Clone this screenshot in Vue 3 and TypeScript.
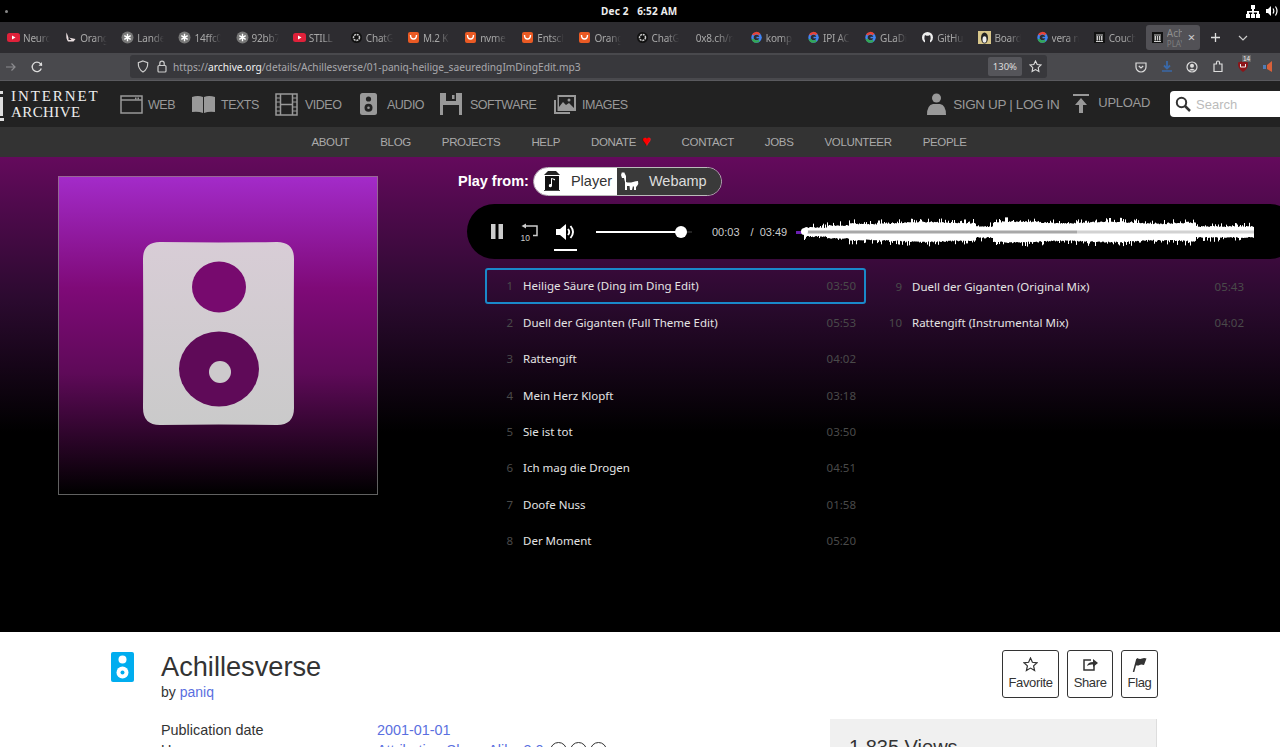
<script setup lang="ts">
import { computed } from 'vue'

interface Tab { label: string; icon: string }
const tabs: Tab[] = [
  { label: 'Neuro', icon: 'yt' }, { label: 'Orange', icon: 'bird' }, { label: 'Lande', icon: 'star' },
  { label: '14ffc0', icon: 'star' }, { label: '92bb7', icon: 'star' }, { label: 'STILL', icon: 'yt' },
  { label: 'ChatG', icon: 'gpt' }, { label: 'M.2 K', icon: 'ali' }, { label: 'nvme', icon: 'ali' },
  { label: 'Entsch', icon: 'ali' }, { label: 'Orang', icon: 'ali' }, { label: 'ChatG', icon: 'gpt' },
  { label: '0x8.ch/rc', icon: 'none' }, { label: 'komp', icon: 'g' }, { label: 'IPI AC', icon: 'g' },
  { label: 'GLaDi', icon: 'g' }, { label: 'GitHu', icon: 'gh' }, { label: 'Board', icon: 'tux' },
  { label: 'vera n', icon: 'g' }, { label: 'Couch', icon: 'ia' },
]
const mainNav = ['WEB', 'TEXTS', 'VIDEO', 'AUDIO', 'SOFTWARE', 'IMAGES']
const subNav = ['ABOUT', 'BLOG', 'PROJECTS', 'HELP', 'DONATE', 'CONTACT', 'JOBS', 'VOLUNTEER', 'PEOPLE']
const tracks = [
  ['Heilige Säure (Ding im Ding Edit)', '03:50'], ['Duell der Giganten (Full Theme Edit)', '05:53'],
  ['Rattengift', '04:02'], ['Mein Herz Klopft', '03:18'], ['Sie ist tot', '03:50'],
  ['Ich mag die Drogen', '04:51'], ['Doofe Nuss', '01:58'], ['Der Moment', '05:20'],
  ['Duell der Giganten (Original Mix)', '05:43'], ['Rattengift (Instrumental Mix)', '04:02'],
]

const wavePath = computed(() => {
  const n = 450
  let seed = 17
  const rnd = () => { seed = (seed * 16807) % 2147483647; return seed / 2147483647 }
  let d = ''
  for (let i = 0; i < n; i++) {
    const t = i / n
    let env = 7.5 + 1.6 * Math.sin(t * Math.PI) + 0.8 * Math.sin(t * 30)
    if (t < 0.05) env = 4
    else if (t < 0.1) env = 6
    else if (t > 0.38 && t < 0.42) env = 5
    else if (t > 0.87) env = 5
    const spike = rnd() > 0.7 ? rnd() * 5 : rnd() * 1
    const spike2 = rnd() > 0.7 ? rnd() * 5 : rnd() * 1
    d += `M${i + 0.5} ${(15 - env - spike).toFixed(1)}V${(15 + env + spike2).toFixed(1)}`
  }
  return d
})
</script>

<template>
  <div class="page">
    <div class="os">
      <span class="os-dot"></span>
      <span class="os-clock">Dec 2&nbsp;&nbsp;&nbsp;6:52 AM</span>
      <span class="os-tray">
        <svg width="14" height="13" viewBox="0 0 14 13"><path fill="#fff" d="M5 0h4v4H8v2h5v3h1v4h-4V9h1V7.500H7.800V9H9v4H5V9h1.200V7.500H3V9h1v4H0V9h1V6h5V4H5z"/></svg>
        <svg width="13" height="12" viewBox="0 0 13 12"><path fill="#fff" d="M0 4h2l3-3v10L2 8H0z"/><path fill="none" stroke="#fff" stroke-width="1.200" d="M7 3.500q1.600 2.500 0 5M9.500 1.500q3 4.500 0 9"/></svg>
      </span>
    </div>

    <div class="tabs">
      <div v-for="(t, i) in tabs" :key="i" class="tab">
        <svg v-if="t.icon !== 'none'" class="fav" width="13" height="13" viewBox="0 0 13 13">
          <template v-if="t.icon === 'yt'"><rect y="2" width="13" height="9" rx="2.500" fill="#e0213a"/><path d="M5 4.500v4l3.500-2z" fill="#fff"/></template>
          <template v-else-if="t.icon === 'bird'"><path d="M2.500 1.500l2 5 7 1.500-2 2.500H4Q1.500 7 2.500 1.500z" fill="#eadfe0"/><path d="M4.500 5.500l3 3.500H4.500z" fill="#2b2a2e"/></template>
          <template v-else-if="t.icon === 'star'"><circle cx="6.500" cy="6.500" r="6" fill="#777"/><path d="M6.500 2.800v7.400M3.300 4.600l6.400 3.800M9.700 4.600L3.300 8.400" stroke="#fff" stroke-width="1.400"/></template>
          <template v-else-if="t.icon === 'gpt'"><circle cx="6.500" cy="6.500" r="5.500" fill="#111"/><circle cx="6.500" cy="6.500" r="3" fill="none" stroke="#ccc" stroke-width="1.500" stroke-dasharray="2 .8"/></template>
          <template v-else-if="t.icon === 'ali'"><rect x="1" y="1" width="11" height="11" rx="2" fill="#ea5a24"/><path d="M3.500 4q0 4 3 4t3-4" fill="none" stroke="#fff" stroke-width="1.400"/></template>
          <template v-else-if="t.icon === 'g'"><circle cx="6.500" cy="6.500" r="4" fill="none" stroke="#4285f4" stroke-width="2.400"/><path d="M3 4a4 4 0 0 1 6.500-.5" fill="none" stroke="#ea4335" stroke-width="2.400"/><path d="M2.700 8a4 4 0 0 0 6.500 1.500" fill="none" stroke="#34a853" stroke-width="2.400"/><path d="M6.500 5.800h5v1.500h-5z" fill="#4285f4"/></template>
          <template v-else-if="t.icon === 'gh'"><circle cx="6.500" cy="6.500" r="5.500" fill="#eee"/><path d="M4 12V9.500Q3 8 3.500 5.500L4 4l1.500.8h2L9 4l.5 1.500Q10 8 9 9.500V12z" fill="#2b2a2e"/></template>
          <template v-else-if="t.icon === 'tux'"><rect width="13" height="13" fill="#d8c68a"/><ellipse cx="6.500" cy="7" rx="3.500" ry="5.500" fill="#222"/><ellipse cx="6.500" cy="8.500" rx="2" ry="3.200" fill="#eee"/></template>
          <template v-else><rect x="1" y="1" width="11" height="11" fill="#111"/><path d="M3 3.500h7v1H3zM3.500 5h1.500v4.500H3.500zM5.800 5h1.400v4.500H5.800zM8 5h1.500v4.500H8zM3 10h7v1H3z" fill="#ccc"/></template>
        </svg>
        <span class="tab-label" :class="{ 'no-icon': t.icon === 'none' }">{{ t.label }}</span>
      </div>
      <div class="tab-active">
        <svg width="13" height="13" viewBox="0 0 13 13"><rect x="1" y="1" width="11" height="11" fill="#111"/><path d="M3 3.500h7v1H3zM3.500 5h1.500v4.500H3.500zM5.800 5h1.400v4.500H5.800zM8 5h1.500v4.500H8zM3 10h7v1H3z" fill="#ccc"/></svg>
        <span class="tab-stack"><span>Ach</span><small>PLAY</small></span>
        <span class="tab-x">×</span>
      </div>
      <svg class="tab-plus" width="11" height="11" viewBox="0 0 11 11"><path d="M5.500 1v9M1 5.500h9" stroke="#ddd" stroke-width="1.300"/></svg>
      <svg class="tab-chev" width="10" height="6" viewBox="0 0 10 6"><path d="M1 1l4 4 4-4" fill="none" stroke="#ccc" stroke-width="1.200"/></svg>
    </div>

    <div class="urlbar">
      <svg class="ub-arrow" width="11" height="10" viewBox="0 0 11 10"><path d="M1 5h9M6.500 1.500L10 5 6.500 8.500" fill="none" stroke="#8c8c90" stroke-width="1.200"/></svg>
      <svg class="ub-reload" width="12" height="12" viewBox="0 0 12 12"><path d="M10.300 7.500A4.700 4.700 0 1 1 9.500 2.800L11 4.500" fill="none" stroke="#ddd" stroke-width="1.300"/><path d="M11 1v3.800H7.500z" fill="#ddd"/></svg>
      <div class="url-field">
        <svg width="12" height="13" viewBox="0 0 12 13"><path d="M6 1l4.700 1.600q.3 6.400-4.700 9.400Q1 9 1.300 2.600z" fill="none" stroke="#ccc" stroke-width="1.200"/></svg>
        <svg class="lock" width="10" height="13" viewBox="0 0 10 13"><rect x="1" y="5.500" width="8" height="6.500" rx="1" fill="none" stroke="#ccc" stroke-width="1.200"/><path d="M2.800 5.500V3.300a2.200 2.200 0 0 1 4.400 0v2.200" fill="none" stroke="#ccc" stroke-width="1.200"/></svg>
        <span class="url"><span>https://</span><b>archive.org</b><span>/details/Achillesverse/01-paniq-heilige_saeuredingImDingEdit.mp3</span></span>
        <span class="zoom-pill">130%</span>
        <svg width="13" height="13" viewBox="0 0 13 13"><path d="M6.500 1l1.700 3.500 3.800.5-2.800 2.600.7 3.800-3.400-1.800-3.400 1.800.7-3.800L1 5l3.800-.5z" fill="none" stroke="#ddd" stroke-width="1.100"/></svg>
      </div>
      <div class="ub-tools">
        <svg width="12" height="12" viewBox="0 0 12 12"><path d="M1 2h10v4a5 5 0 0 1-10 0z" fill="none" stroke="#ddd" stroke-width="1.200"/><path d="M3.800 5L6 7l2.200-2" fill="none" stroke="#ddd" stroke-width="1.200"/></svg>
        <svg width="12" height="13" viewBox="0 0 12 13"><path d="M6 1v7M3 5.500L6 8.500l3-3" fill="none" stroke="#3a69a8" stroke-width="1.800"/><path d="M1 11h10" stroke="#3a69a8" stroke-width="1.500"/></svg>
        <svg width="12" height="12" viewBox="0 0 12 12"><circle cx="6" cy="6" r="5" fill="none" stroke="#ddd" stroke-width="1.200"/><circle cx="6" cy="4.800" r="2" fill="#ddd"/><path d="M2.500 9.500q3.500-3.500 7 0z" fill="#ddd"/></svg>
        <svg width="12" height="13" viewBox="0 0 12 13"><path d="M2 4h2.500V2.500a1.500 1.500 0 0 1 3 0V4H10v7.500H2z" fill="none" stroke="#ddd" stroke-width="1.200"/></svg>
        <span class="ublock">
          <svg width="12" height="13" viewBox="0 0 12 13"><path d="M1 2.500L6 1l5 1.500q.3 6.500-5 9.500Q.7 9 1 2.500z" fill="#8e1418"/><path d="M3.500 4v3h5V4" fill="none" stroke="#eee"/></svg>
          <em>14</em>
        </span>
        <svg width="11" height="13" viewBox="0 0 11 13"><path d="M0 5h3v4H0z" fill="#4f7cb5"/><path d="M4 5l5-4v11L4 9z" fill="#d9613a"/></svg>
      </div>
    </div>

    <header class="ia-top">
      <div class="ia-logo">
        <svg class="ia-mark" width="4" height="34" viewBox="0 0 4 34"><path d="M0 3h3v3H0zM0 9h3v19H0zM0 30h4v3H0z" fill="#ddd"/></svg>
        <div class="ia-word"><span class="w1">INTERNET</span><span class="w2">ARCHIVE</span></div>
      </div>
      <nav class="ia-media">
        <a v-for="m in mainNav" :key="m" class="ia-item">
          <svg v-if="m === 'WEB'" width="23" height="19" viewBox="0 0 23 19"><rect x="1" y="1" width="21" height="17" fill="none" stroke="#999" stroke-width="1.500"/><path d="M1 5h21" stroke="#999" stroke-width="1.500"/><path d="M15 2.500h1.500v2H15zM17.500 2.500H19v2h-1.500z" fill="#999"/></svg>
          <svg v-else-if="m === 'TEXTS'" width="23" height="19" viewBox="0 0 23 19"><path d="M0 2q6-2 11 0v16Q6 16 0 17zM23 2q-6-2-11 0v16q5-2 11-1z" fill="#999"/></svg>
          <svg v-else-if="m === 'VIDEO'" width="23" height="23" viewBox="0 0 23 23"><rect x="1" y="1" width="21" height="21" fill="none" stroke="#999" stroke-width="1.500"/><path d="M5.500 1v21M17.500 1v21M5.500 11.500h12" stroke="#999" stroke-width="1.500"/><path d="M1 5h4M1 9h4M1 14h4M1 18h4M18 5h4M18 9h4M18 14h4M18 18h4" stroke="#999"/></svg>
          <svg v-else-if="m === 'AUDIO'" width="17" height="22" viewBox="0 0 17 22"><rect width="17" height="22" rx="2.500" fill="#999"/><circle cx="8.500" cy="6" r="2.600" fill="#222"/><circle cx="8.500" cy="14.800" r="4" fill="#222"/><circle cx="8.500" cy="14.800" r="1.300" fill="#999"/></svg>
          <svg v-else-if="m === 'SOFTWARE'" width="22" height="22" viewBox="0 0 22 22"><path d="M0 0h22v22H0z" fill="#999"/><path d="M6 0h10v8H6z" fill="#222"/><path d="M12 2h2.500v4H12z" fill="#999"/><path d="M3 12h16v10H3z" fill="#222"/></svg>
          <svg v-else width="22" height="19" viewBox="0 0 22 19"><path d="M0 5h2v12h14v2H0z" fill="#999"/><path d="M3.500 0H22v16H3.500z" fill="#999"/><path d="M5 2v10l4-5 3 3 3-2 5 5V2z" fill="#222"/><circle cx="15" cy="5" r="1.500" fill="#999"/></svg>
          <span>{{ m }}</span>
        </a>
      </nav>
      <div class="ia-right">
        <svg width="19" height="22" viewBox="0 0 19 22"><circle cx="9.500" cy="5" r="4.500" fill="#999"/><path d="M0 22q0-10 6-11h7q6 1 6 11z" fill="#999"/></svg>
        <span class="ia-sign">SIGN UP | LOG IN</span>
        <svg class="ia-up" width="16" height="19" viewBox="0 0 16 19"><path d="M0 0h16v2H0zM8 4l6 7h-4v8H6v-8H2z" fill="#999"/></svg>
        <span class="ia-upload">UPLOAD</span>
        <div class="ia-search">
          <svg width="16" height="16" viewBox="0 0 16 16"><circle cx="6.500" cy="6.500" r="4.700" fill="none" stroke="#333" stroke-width="2"/><path d="M10 10l5 5" stroke="#333" stroke-width="2.500"/></svg>
          <span>Search</span>
        </div>
      </div>
    </header>
    <nav class="ia-sub">
      <a v-for="s in subNav" :key="s">{{ s }}<i v-if="s === 'DONATE'" class="heart">♥</i></a>
    </nav>

    <section class="theatre">
      <div class="cover">
        <svg width="151" height="183" viewBox="0 0 151 183">
          <defs><linearGradient id="sp" x1="0" y1="0" x2="0" y2="1"><stop offset="0" stop-color="#d8cdd6"/><stop offset="1" stop-color="#cacaca"/></linearGradient></defs>
          <path fill="url(#sp)" d="M17 0Q76 .8 134 0 151 0 151 17 150.500 92 151 166 151 183 134 183 76 182.200 17 183 0 183 0 166 .5 92 0 17 0 0 17 0z"/>
          <ellipse cx="76" cy="45" rx="27" ry="25.500" fill="#770a6e"/>
          <ellipse cx="76" cy="127" rx="40" ry="37.500" fill="#5f0a58"/>
          <circle cx="77" cy="130" r="11" fill="#cdcacc"/>
        </svg>
      </div>
      <div class="stage">
        <div class="source">
          <strong>Play from:</strong>
          <div class="switch">
            <span class="sw-player">
              <svg width="18" height="20" viewBox="0 0 18 20"><path d="M1 4L5 0h8l4 4z" fill="#222"/><path d="M2 5h14v14H2z" fill="#111"/><path d="M9 8v6.500a1.600 1.600 0 1 1-1-1.400V7l4 1v1.500z" fill="#fff"/><path d="M1 19h16v1H1z" fill="#444"/></svg>
              Player
            </span>
            <span class="sw-webamp">
              <svg width="20" height="20" viewBox="0 0 20 20"><path d="M1 4l1-3 1 1 1-1 1 2 1 2v6q3 1 7 0 3-1 5-1 1 3-1 5l-1 1v3h-2v-3l-1-1-1 4h-2l-.5-4H7v4H5v-8L4 7H2z" fill="#fff"/></svg>
              Webamp
            </span>
          </div>
        </div>
        <div class="player">
          <svg class="pl-pause" width="12" height="15" viewBox="0 0 12 15"><path d="M0 0h4.500v15H0zM7.500 0H12v15H7.500z" fill="#ccc"/></svg>
          <svg class="pl-back" width="18" height="18" viewBox="0 0 18 18"><path d="M6 3h11v9.500h-4" fill="none" stroke="#ccc" stroke-width="1.500"/><path d="M6 .5v5L1.500 3z" fill="#ccc"/><text x="0.500" y="17.500" font-size="8.500" fill="#ccc" font-family="Liberation Sans, sans-serif">10</text></svg>
          <div class="pl-vol">
            <svg width="19" height="16" viewBox="0 0 19 16"><path d="M0 5h4l6-5v16l-6-5H0z" fill="#fff"/><path d="M12 5q2.500 3 0 6M14.500 2q5 6 0 12" fill="none" stroke="#fff" stroke-width="1.900"/></svg>
            <i></i>
          </div>
          <div class="pl-slider"><i></i><b></b></div>
          <span class="pl-cur">00:03</span>
          <span class="pl-tot">/&nbsp;&nbsp;03:49</span>
          <div class="pl-wave">
            <i class="pl-done"></i>
            <svg width="450" height="30" viewBox="0 0 450 30">
              <path :d="wavePath" stroke="#fff" stroke-width="1" fill="none"/>
              <rect x="0" y="13.500" width="273" height="3" fill="#a8a8a8"/>
              <rect x="273" y="13.500" width="177" height="3" fill="#d2d2d2"/>
            </svg>
            <b class="pl-knob"></b>
          </div>
        </div>
        <ol class="tracks">
          <li v-for="(t, i) in tracks" :key="i" class="track" :class="{ on: i === 0 }">
            <span class="t-n">{{ i + 1 }}</span>
            <span class="t-name">{{ t[0] }}</span>
            <span class="t-d">{{ t[1] }}</span>
          </li>
        </ol>
      </div>
    </section>

    <section class="info">
      <svg class="info-ico" width="23" height="30" viewBox="0 0 23 30"><rect width="23" height="30" rx="2" fill="#00adef"/><circle cx="11.500" cy="7.500" r="4" fill="#fff"/><circle cx="11.500" cy="20.500" r="6" fill="#fff"/><circle cx="11.500" cy="20.500" r="2" fill="#00adef"/></svg>
      <div class="info-main">
        <h1>Achillesverse</h1>
        <div class="by">by <a>paniq</a></div>
        <dl class="meta">
          <dt>Publication date</dt><dd>2001-01-01</dd>
          <dt>Usage</dt>
          <dd>Attribution-Share Alike 3.0
            <span class="cc"></span><span class="cc"></span><span class="cc"></span>
          </dd>
        </dl>
      </div>
      <div class="info-side">
        <div class="acts">
          <button>
            <svg width="15" height="15" viewBox="0 0 15 15"><path d="M7.500 1l1.900 4.300 4.600.5-3.400 3.100 1 4.600-4.100-2.400-4.100 2.400 1-4.600L1 5.800l4.600-.5z" fill="none" stroke="#333" stroke-width="1.200"/></svg>
            Favorite
          </button>
          <button>
            <svg width="15" height="15" viewBox="0 0 15 15"><path d="M8 3H1v10h10V8" fill="none" stroke="#333" stroke-width="1.500"/><path d="M4 9q1-4 6-4V2l5 4-5 4V7.500Q6 7 4 9z" fill="#333"/></svg>
            Share
          </button>
          <button>
            <svg width="15" height="15" viewBox="0 0 15 15"><path d="M1.500 15L5 2" stroke="#333" stroke-width="1.500"/><path d="M5 1q3 1.500 5 .5t4.500 0L12 8q-3-1-4.500 0T3.500 8z" fill="#333"/></svg>
            Flag
          </button>
        </div>
        <div class="views">1,835 Views</div>
      </div>
    </section>
  </div>
</template>

<style scoped>
.page { width: 1280px; height: 747px; overflow: hidden; background: #fff; font-family: "Liberation Sans", Arial, sans-serif; }

.os { height: 22px; background: #000; color: #eee; font: 700 10px "Noto Sans", sans-serif; display: flex; align-items: center; position: relative; }
.os-dot { width: 3px; height: 3px; border-radius: 50%; background: #888; margin-left: 5px; }
.os-clock { position: absolute; left: 601px; letter-spacing: .2px; }
.os-tray { margin-left: auto; margin-right: 1px; display: flex; gap: 6px; align-items: center; }

.tabs { height: 31px; background: #2d2c30; display: flex; align-items: center; padding-left: 7px; box-sizing: border-box; font: 10px "Noto Sans", sans-serif; color: #a8a8a8; }
.tab { width: 57.150px; flex: none; display: flex; align-items: center; gap: 3px; }
.fav { flex: none; }
.tab-label { width: 27px; overflow: hidden; white-space: nowrap; letter-spacing: -.2px; -webkit-mask-image: linear-gradient(90deg, #000 55%, transparent); mask-image: linear-gradient(90deg, #000 55%, transparent); }
.tab-label.no-icon { width: 38px; margin-left: 3px; }
.tab-active { width: 54px; height: 25px; flex: none; margin-left: -4px; background: #525156; border-radius: 3px; display: flex; align-items: center; padding-left: 5px; box-sizing: border-box; gap: 3px; }
.tab-stack { width: 15px; overflow: hidden; display: flex; flex-direction: column; line-height: 11px; color: #8e8e8e; white-space: nowrap; }
.tab-stack small { font-size: 8px; line-height: 9px; color: #7e7e7e; }
.tab-x { color: #ccc; font-size: 13px; line-height: 1; margin-left: 3px; }
.tab-plus { margin-left: 10px; flex: none; }
.tab-chev { margin-left: 17px; flex: none; }

.urlbar { height: 28px; background: #49494d; display: flex; align-items: center; border-bottom: 1px solid #5a5a5e; box-sizing: border-box; }
.ub-arrow { margin-left: 5px; }
.ub-reload { margin-left: 15px; }
.url-field { margin-left: 87px; width: 917px; height: 23px; background: #38383c; border-radius: 3px; display: flex; align-items: center; box-sizing: border-box; padding: 0 5px 0 7px; }
.lock { margin-left: 8px; }
.url { font: 10.200px "Noto Sans", sans-serif; color: #a8a8ac; margin-left: 6px; white-space: nowrap; flex: 1; }
.url b { color: #f0f0f0; font-weight: 400; }
.zoom-pill { background: #55555a; color: #ddd; font: 9.500px "Noto Sans", sans-serif; padding: 3px 5px; border-radius: 2px; margin-right: 7px; }
.ub-tools { display: flex; align-items: center; gap: 13.500px; margin-left: 88px; }
.ublock { position: relative; display: flex; }
.ublock em { position: absolute; left: 5px; top: -5px; font: 6.500px "Liberation Sans", sans-serif; background: #666; color: #eee; padding: 0 1px; }

.ia-top { height: 46px; background: #222; display: flex; align-items: center; color: #999; }
.ia-logo { display: flex; align-items: center; width: 120px; flex: none; }
.ia-mark { flex: none; margin-top: 1px; }
.ia-word { font: 400 15px/16px "Liberation Serif", serif; color: #eee; margin-left: 7px; white-space: nowrap; display: flex; flex-direction: column; }
.w1 { letter-spacing: 1.900px; }
.w2 { letter-spacing: .400px; }
.ia-media { display: flex; align-items: center; }
.ia-item { display: flex; align-items: center; font-size: 12.500px; letter-spacing: -.5px; height: 46px; }
.ia-item:nth-child(1) { width: 72px; }
.ia-item:nth-child(2) { width: 83px; }
.ia-item:nth-child(3) { width: 85px; }
.ia-item:nth-child(4) { width: 80px; }
.ia-item:nth-child(5) { width: 114px; }
.ia-item:nth-child(6) { width: 90px; }
.ia-item span { padding-top: 1px; }
.ia-item:nth-child(1) span { margin-left: 5px; }
.ia-item:nth-child(2) span { margin-left: 6px; }
.ia-item:nth-child(3) span { margin-left: 7px; }
.ia-item:nth-child(4) span { margin-left: 10px; }
.ia-item:nth-child(5) span { margin-left: 8px; }
.ia-item:nth-child(6) span { margin-left: 6px; }
.ia-right { margin-left: auto; display: flex; align-items: center; }
.ia-sign { margin-left: 7px; font-size: 13.500px; letter-spacing: -.37px; }
.ia-up { margin-left: 14px; margin-top: -1px; }
.ia-upload { margin-left: 9px; font-size: 13px; letter-spacing: -.3px; margin-top: -4px; }
.ia-search { margin-left: 20px; width: 110px; height: 26px; background: #fff; border-radius: 4px 0 0 4px; display: flex; align-items: center; box-sizing: border-box; padding-left: 5px; color: #bbb; font-size: 13px; gap: 5px; }

.ia-sub { height: 30px; background: #333; display: flex; justify-content: center; align-items: center; gap: 31px; font-size: 11.500px; letter-spacing: -.35px; color: #aaa; padding-right: 2px; }
.heart { color: #f00; font-style: normal; margin-left: 6px; font-size: 15px; line-height: 0; }

.theatre { height: 475px; background: linear-gradient(180deg, #640a5c 0%, #4c0a4a 12%, #2b0a2f 30%, #000 58%); display: flex; box-sizing: border-box; padding: 19px 0 0 58px; }
.cover { width: 320px; height: 319px; flex: none; box-sizing: border-box; border: 1px solid rgba(255,255,255,.38); background: linear-gradient(180deg, #a32bc9 0%, #7f0a78 35%, #5e0a58 62%, #000 100%) padding-box; display: flex; align-items: center; justify-content: center; padding-bottom: 5px; }
.stage { margin-left: 80px; margin-top: -9px; width: 822px; flex: none; }
.source { display: flex; align-items: center; height: 28px; }
.source strong { color: #fff; font-size: 14.500px; }
.switch { display: flex; margin-left: 4px; height: 29px; border: 1px solid #bbb; border-radius: 15px; overflow: hidden; box-sizing: border-box; font-size: 14.500px; }
.switch span { display: flex; align-items: center; }
.sw-player { background: #fff; color: #333; width: 83px; box-sizing: border-box; padding-left: 9px; gap: 10px; }
.sw-webamp { background: #3a3a3a; color: #ddd; width: 104px; box-sizing: border-box; padding-left: 3px; gap: 9px; }

.player { margin: 9px 0 0 9px; width: 830px; height: 55px; background: #000; border-radius: 28px; display: flex; align-items: center; position: relative; color: #ccc; font-size: 11px; box-sizing: border-box; padding-left: 24px; }
.pl-back { margin-left: 17px; }
.pl-vol { margin-left: 18px; position: relative; display: flex; }
.pl-vol i { position: absolute; left: -2px; top: 25px; width: 23px; height: 2px; background: #fff; }
.pl-slider { margin-left: 21px; width: 96px; height: 2px; background: #222; position: relative; }
.pl-slider i { position: absolute; left: 0; top: 0; width: 85px; height: 2px; background: #fff; }
.pl-slider b { position: absolute; left: 79px; top: -5px; width: 12px; height: 12px; background: #fff; border-radius: 50%; }
.pl-cur { margin-left: 20px; }
.pl-tot { margin-left: 11px; }
.pl-wave { margin-left: 9px; position: relative; display: flex; align-items: center; padding-left: 8px; }
.pl-done { position: absolute; left: 0; top: 14px; width: 8px; height: 3px; background: #6a1fb0; }
.pl-knob { position: absolute; left: 5px; top: 11px; width: 7px; height: 7px; background: #fff; border-radius: 50%; }

.tracks { list-style: none; margin: 9px 0 0 27px; padding: 0; display: grid; grid-auto-flow: column; grid-template-rows: repeat(8, 36.360px); grid-template-columns: 381px 380px; column-gap: 8px; font: 11.500px "Noto Sans", sans-serif; color: #ddd; }
.track { display: flex; align-items: center; box-sizing: border-box; padding-left: 21px; padding-right: 10px; border-radius: 3px; }
.track.on { border: 2px solid #1a88c9; padding-left: 19px; height: 36px; padding-right: 8px; padding-bottom: 1px; }
.t-n { width: 7px; color: #4a4a4a; text-align: right; flex: none; margin-right: 10px; white-space: nowrap; direction: rtl; }
.t-name { flex: 1; color: #e4e4e4; }
.t-d { color: #4a4a4a; }

.info { display: flex; position: relative; height: 115px; padding-left: 111px; box-sizing: border-box; background: #fff; color: #333; }
.info-ico { margin-top: 20px; flex: none; }
.info-main { margin-left: 27px; width: 648px; flex: none; }
h1 { margin: 18px 0 0; font-size: 27.200px; font-weight: 400; line-height: 34px; color: #333; }
.by { font-size: 14px; line-height: 18px; margin-top: -1px; }
.by a, dd { color: #5a6fe0; }
.meta { display: grid; grid-template-columns: 216px 1fr; margin: 19px 0 0; font-size: 14.400px; line-height: 20px; }
dt, dd { margin: 0; white-space: nowrap; }
.cc { display: inline-block; width: 17px; height: 17px; border: 1.500px solid #333; border-radius: 50%; margin-left: 3px; vertical-align: -4px; box-sizing: border-box; }
.info-side { margin-left: 21px; width: 327px; flex: none; display: flex; flex-direction: column; }
.acts { display: flex; justify-content: flex-end; gap: 8px; margin-top: 18px; margin-right: -1px; }
.acts button { height: 48px; border: 1px solid #333; border-radius: 3px; background: #fff; color: #333; font: 13px "Liberation Sans", sans-serif; letter-spacing: -.35px; padding: 6px 5.500px 0; box-sizing: border-box; display: flex; flex-direction: column; align-items: center; gap: 3px; }
.views { margin-top: 21px; background: #f0f0f0; height: 60px; font-size: 20px; padding: 17px 0 0 19px; box-sizing: border-box; border-right: 1px solid #ddd; color: #333; }
</style>
